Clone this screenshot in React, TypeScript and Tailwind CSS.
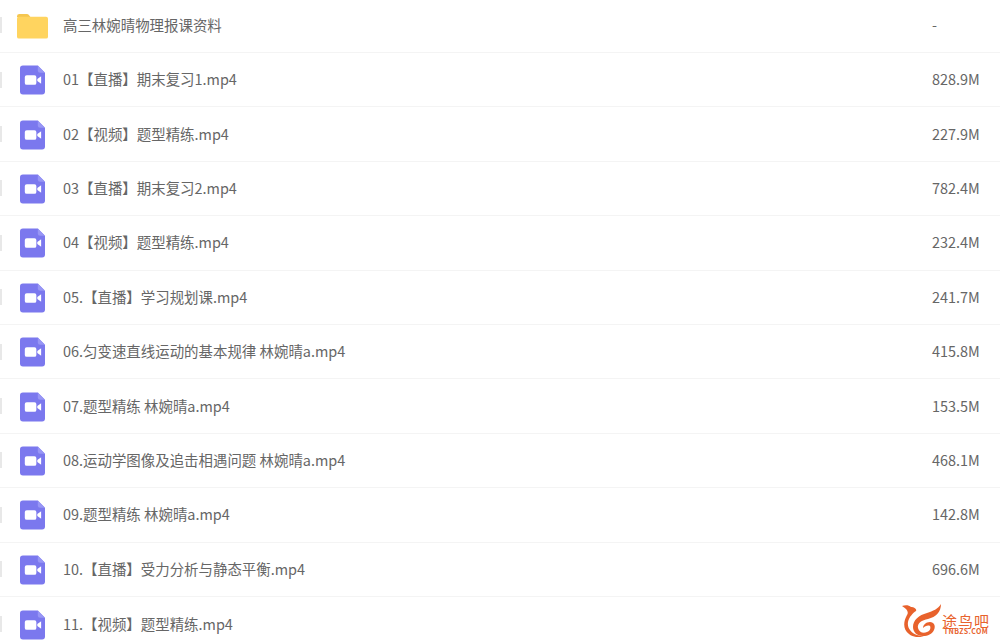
import React from 'react';

const rows = [
  { name: '01【直播】期末复习1.mp4', size: '828.9M' },
  { name: '02【视频】题型精练.mp4', size: '227.9M' },
  { name: '03【直播】期末复习2.mp4', size: '782.4M' },
  { name: '04【视频】题型精练.mp4', size: '232.4M' },
  { name: '05.【直播】学习规划课.mp4', size: '241.7M' },
  { name: '06.匀变速直线运动的基本规律 林婉晴a.mp4', size: '415.8M' },
  { name: '07.题型精练 林婉晴a.mp4', size: '153.5M' },
  { name: '08.运动学图像及追击相遇问题 林婉晴a.mp4', size: '468.1M' },
  { name: '09.题型精练 林婉晴a.mp4', size: '142.8M' },
  { name: '10.【直播】受力分析与静态平衡.mp4', size: '696.6M' },
  { name: '11.【视频】题型精练.mp4', size: '' },
];

const FolderIcon = () => (
  <svg width="31" height="26" viewBox="0 0 32 26">
    <path d="M0 3a2.500 2.500 0 0 1 2.500-2.500h7.500a3 3 0 0 1 2.500 1.300L14 4H0z" fill="#f5c64f" />
    <path d="M0 5.500a2 2 0 0 1 2-2h28a2 2 0 0 1 2 2V24a2 2 0 0 1-2 2H2a2 2 0 0 1-2-2z" fill="#ffd45f" />
  </svg>
);

const VideoIcon = () => (
  <svg width="25" height="30" viewBox="0 0 26 30">
    <path d="M3 0h15.500L26 7.500V27a3 3 0 0 1-3 3H3a3 3 0 0 1-3-3V3a3 3 0 0 1 3-3z" fill="#7b78ee" />
    <path d="M18.500 0L26 7.500h-5a2.500 2.500 0 0 1-2.500-2.500z" fill="#9896f5" />
    <rect x="5" y="10" width="12" height="10" rx="2" fill="#fff" />
    <path d="M18 14l4-3v8l-4-3z" fill="#fff" />
  </svg>
);

const Row = ({ icon, name, size }: { icon: React.ReactNode; name: string; size: string }) => (
  <div className="flex h-[54.4px] items-center border-b border-[#f4f4f4] last:border-b-0">
    <div className="h-[16px] w-[2px] bg-[#e8e8e8]" />
    <div className="flex w-[61px] justify-center pt-[1px]">{icon}</div>
    <div className="flex-1 pb-[1px] text-[14.45px] leading-[20px] text-[#666]">{name}</div>
    {size && <div className="w-[68px] pb-[1px] text-[14.45px] leading-[20px] text-[#666]">{size}</div>}
  </div>
);

const App = () => {
  return (
    <div className="relative h-[640px] w-[1000px] overflow-hidden bg-white font-['Noto_Sans_CJK_SC','Noto_Sans',sans-serif]">
      <div className="-mt-[1.4px]">
        <Row icon={<FolderIcon />} name="高三林婉晴物理报课资料" size="-" />
        {rows.map((r) => (
          <Row key={r.name} icon={<VideoIcon />} name={r.name} size={r.size} />
        ))}
      </div>
      {/* watermark */}
      <div className="absolute left-[902px] top-[604px] flex items-end">
        <svg width="40" height="33" viewBox="0 0 40 33">
          <path d="M0 2c3-1 7-1 9 1 3 0 6 2 5 4-3 2-7 6-8 11-1 6 3 11 9 13 3 1 6 1 9 0-5 3-12 3-17-1C1 26 1 18 5 11 7 8 5 5 0 2z" fill="#e8622c" />
          <path d="M39 0c0 8-5 13-13 15-6 1-11 4-10 9 1 4 5 6 9 4 3-1 4-4 3-6-2-1-5 0-7 2 0-3 3-6 7-6 4 0 6 4 4 8-2 4-6 6-11 6-6 0-10-4-10-9 0-7 6-12 14-14 6-2 11-4 14-9z" fill="#e8622c" />
        </svg>
        <div className="flex w-[48px] flex-col items-center whitespace-nowrap text-[#e8622c]">
          <span className="text-[15px] leading-[15px] tracking-[1px]">途鸟吧</span>
          <span className="mb-[2px] text-[7px] font-bold leading-[7px] tracking-[0.4px]">TNBZS.COM</span>
        </div>
      </div>
    </div>
  );
};

export default App;
